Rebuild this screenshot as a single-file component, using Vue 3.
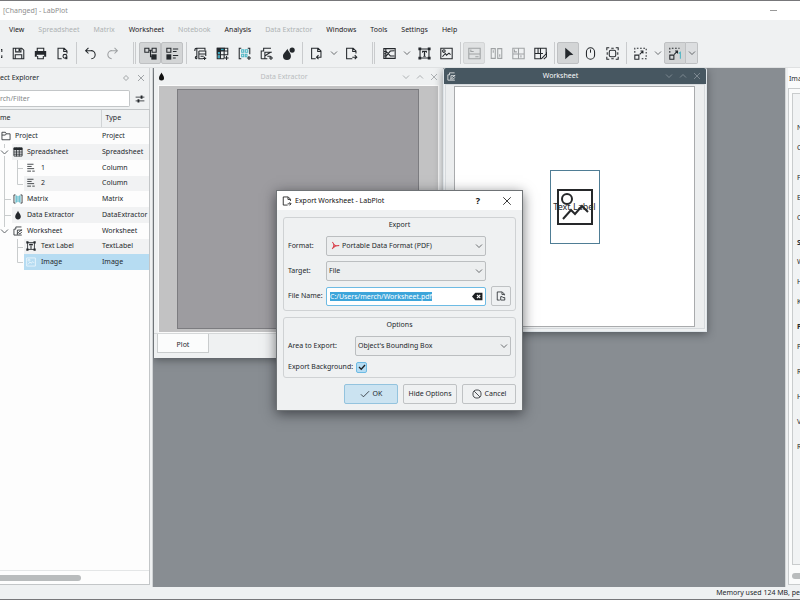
<script setup>
import { ref, onMounted } from 'vue'

const menus = [
  { label: 'View' },
  { label: 'Spreadsheet', off: true },
  { label: 'Matrix', off: true },
  { label: 'Worksheet' },
  { label: 'Notebook', off: true },
  { label: 'Analysis' },
  { label: 'Data Extractor', off: true },
  { label: 'Windows' },
  { label: 'Tools' },
  { label: 'Settings' },
  { label: 'Help' },
]

const tools = [
  { icon: 'edge', kind: 'edge', label: 'Open' },
  { icon: 'save', label: 'Save' },
  { icon: 'print', label: 'Print' },
  { icon: 'preview', label: 'Print preview' },
  { kind: 'sep' },
  { icon: 'undo', label: 'Undo' },
  { icon: 'redo', label: 'Redo', off: true },
  { kind: 'handle' },
  { icon: 'tree', label: 'Project explorer', on: true },
  { icon: 'props', label: 'Properties explorer', on: true },
  { kind: 'sep' },
  { icon: 'workbook', label: 'New workbook' },
  { icon: 'sheet-new', label: 'New spreadsheet' },
  { icon: 'matrix-new', label: 'New matrix' },
  { icon: 'worksheet-new', label: 'New worksheet' },
  { icon: 'extractor-new', label: 'New data extractor' },
  { kind: 'sep' },
  { icon: 'import', label: 'Import' },
  { icon: 'chevron', kind: 'arrow', label: 'Import options' },
  { icon: 'export', label: 'Export' },
  { kind: 'handle' },
  { icon: 'plot', label: 'New plot area' },
  { icon: 'chevron', kind: 'arrow', label: 'Plot area options' },
  { icon: 'text', label: 'Text label' },
  { icon: 'image', label: 'Image' },
  { kind: 'sep' },
  { icon: 'lay-v', label: 'Vertical layout', off: true, on: true, light: true },
  { icon: 'lay-h', label: 'Horizontal layout', off: true },
  { icon: 'lay-g', label: 'Grid layout', off: true },
  { icon: 'lay-e', label: 'Edit layout' },
  { kind: 'sep' },
  { icon: 'cursor', label: 'Select', on: true },
  { icon: 'mouse', label: 'Navigate' },
  { icon: 'zoomsel', label: 'Zoom selection' },
  { kind: 'sep' },
  { icon: 'mag', label: 'Magnification' },
  { icon: 'chevron', kind: 'arrow', label: 'Magnification options' },
  { icon: 'fit', kind: 'split', label: 'Zoom fit', on: true },
  { icon: 'chevron', kind: 'arrow splitarrow', label: 'Zoom fit options', on: true },
]

const tree = [
  { name: 'Project', type: 'Project', icon: 'folder', level: 0, lines: '' },
  { name: 'Spreadsheet', type: 'Spreadsheet', icon: 'sheet', level: 1, lines: 'M4.5 0V4M4.5 12V16', open: true },
  { name: '1', type: 'Column', icon: 'column', level: 2, lines: 'M4.5 0V16M17.5 0V16M17 8.5H23' },
  { name: '2', type: 'Column', icon: 'column', level: 2, lines: 'M4.5 0V16M17.5 0V8.5H23' },
  { name: 'Matrix', type: 'Matrix', icon: 'matrix', level: 1, lines: 'M4.5 0V16M4 8.5H11' },
  { name: 'Data Extractor', type: 'DataExtractor', icon: 'drop', level: 1, lines: 'M4.5 0V16M4 8.5H11' },
  { name: 'Worksheet', type: 'Worksheet', icon: 'worksheet', level: 1, lines: 'M4.5 0V4', open: true },
  { name: 'Text Label', type: 'TextLabel', icon: 'text', level: 2, lines: 'M17.5 0V16M17 8.5H23' },
  { name: 'Image', type: 'Image', icon: 'image', level: 2, lines: 'M17.5 0V8.5H23', selected: true },
]

const properties = [
  { t: 'N', gap: 'first' }, { t: 'C', gap: 'mid' }, { t: 'F', gap: 'wide' }, { t: 'E', gap: 'mid' }, { t: 'C', gap: 'mid' },
  { t: 'S', gap: 'far', head: true }, { t: 'W', gap: 'near' }, { t: 'H', gap: 'mid' }, { t: 'K', gap: 'mid' },
  { t: 'P', gap: 'far', head: true }, { t: 'P', gap: 'mid' }, { t: 'R', gap: 'far' }, { t: 'H', gap: 'far' }, { t: 'V', gap: 'far' }, { t: 'R', gap: 'far' },
]

const fileName = ref('C:/Users/merch/Worksheet.pdf')
const background = ref(true)
const fileInput = ref(null)

onMounted(() => {
  fileInput.value.focus()
  fileInput.value.select()
})
</script>

<template>
  <div class="app">
    <svg class="defs" aria-hidden="true">
      <symbol id="edge" viewBox="0 0 16 16"><path class="s" d="M0 3H1V6M0 13H1V10" /></symbol>
      <symbol id="save" viewBox="0 0 16 16"><path class="s" d="M1.5 1.5H12L14.5 4V14.5H1.5ZM4.5 1.5V6H11V1.5M4 14V9.5H12V14" /><path class="f" d="M8 2H10V5H8Z" /></symbol>
      <symbol id="print" viewBox="0 0 16 16"><path class="s" d="M4 5V1.5H12V5M4.5 11V14.5H11.5V11" /><path class="f" d="M1 5H15V12H12.5V9.5H3.5V12H1Z" /></symbol>
      <symbol id="preview" viewBox="0 0 16 16"><path class="s" d="M7 14.5H2.5V1.5H10L13.5 5V8M9.5 2V5.5H13" /><circle class="s" cx="11" cy="11.5" r="2.4" /><path class="f" d="M11.5 12H14V15H11.5Z" /></symbol>
      <symbol id="undo" viewBox="0 0 16 16"><path class="s" d="M5.5 1L2 4.5L5.5 8M2 4.5H8.5A5 5 0 0 1 9 14.5" /></symbol>
      <symbol id="redo" viewBox="0 0 16 16"><path class="s" d="M10.5 1L14 4.5L10.5 8M14 4.5H7.5A5 5 0 0 0 7 14.5" /></symbol>
      <symbol id="tree" viewBox="0 0 16 16"><path class="s" d="M1 1.5H6V6.5H1ZM10 1.5H15V6.5H10ZM6 4H10M8 4V12H10" /><path class="f" d="M9 9H15.5V15.5H9Z" /></symbol>
      <symbol id="props" viewBox="0 0 16 16"><path class="s" d="M1 1.5H6V6.5H1ZM8.5 2.5H15M8.5 5.5H13M8.5 10.5H15M8.5 13.5H12" /><path class="f" d="M.5 9H6.5V15.5H.5Z" /></symbol>
      <symbol id="workbook" viewBox="0 0 16 16"><path class="s" d="M3.5 14.5C1 14.5 1 11.5 3.5 11.5M3.5 14.5V1.5M1 5C1 2 1.5 1.5 3 1.5H13.5V4M6 5H14.5V11M6 5V14.5H11M6 8.5H14M8 11.5H12M13 12V16M11 14H15" /></symbol>
      <symbol id="sheet-new" viewBox="0 0 16 16"><path class="f" d="M1 1H11V5H1ZM1 5H5V9H1Z" /><path class="c" d="M6 1.5H10V4H6ZM2 6H5V9H2ZM2 10H5V14H2Z" /><path class="s" d="M1.5 1.5H14.5V10M1.5 1V14.5H10M1 5H15M1 9.5H15M5.5 1V14.5M10 1V14M13 11V16M10.5 13.5H15.5" /></symbol>
      <symbol id="matrix-new" viewBox="0 0 16 16"><path class="s" d="M4 1.5H1.5V14.5H4M12 1.5H14.5V9M13.5 11V16M11 13.5H16" /><path class="cs" d="M4.5 3.5H7V6.5H4.5ZM9 3.5H12V6.5H9ZM4.5 9H7V12H4.5ZM9 9H11V12H9Z" /></symbol>
      <symbol id="worksheet-new" viewBox="0 0 16 16"><path class="s" d="M1.5 14.5V5H4.5V1.5H13.5M1.5 14.5H9M6 14V6.5H14.5M6 11L9 9L14 6M9 11.5H13M13.5 11V16M11 13.5H16" /></symbol>
      <symbol id="worksheet" viewBox="0 0 16 16"><path class="s" d="M1.5 14.5V5H4.5V1.5H13.5M1.5 14.5H14M7 14V6.5H14.5M7 12L10 9L14.5 6M9 12.5L12 12L14 9.5" /></symbol>
      <symbol id="drop" viewBox="0 0 16 16"><path class="f" d="M8 1C9 4 12.5 7 12.5 10.5A4.5 4.5 0 0 1 3.5 10.5C3.5 7 7 4 8 1Z" /></symbol>
      <symbol id="extractor-new" viewBox="0 0 16 16"><path class="f" d="M6.5 2C7.5 5 11 7.5 11 11A4.8 4.8 0 0 1 1.2 11C1.2 7.5 5.5 5 6.5 2Z" /><circle class="f" cx="12.5" cy="3.8" r="3.2" /></symbol>
      <symbol id="import" viewBox="0 0 16 16"><path class="s" d="M7 14.5H2V1.5H10L13.5 5V12.5H8M9.5 2V5.5H13M10.5 10L8 12.5L10.5 15" /></symbol>
      <symbol id="export" viewBox="0 0 16 16"><path class="s" d="M9 14.5H2V1.5H10L13.5 5V8M9.5 2V5.5H13M9 12.5H14M12 10L14.5 12.5L12 15" /></symbol>
      <symbol id="chevron" viewBox="0 0 16 16"><path class="s" d="M2 5L8 11L14 5" /></symbol>
      <symbol id="chevron-up" viewBox="0 0 16 16"><path class="s" d="M2 11L8 5L14 11" /></symbol>
      <symbol id="close" viewBox="0 0 16 16"><path class="s" d="M2 2L14 14M14 2L2 14" /></symbol>
      <symbol id="diamond" viewBox="0 0 16 16"><path class="s" d="M8 3L13 8L8 13L3 8Z" /></symbol>
      <symbol id="plot" viewBox="0 0 16 16"><path class="s" d="M1 2H15V14H1ZM3.5 2V14M1 5.5H4L9 11L14 11M1 11H4L9 5L14 4.5M1 8.2H4" /></symbol>
      <symbol id="text" viewBox="0 0 16 16"><path class="s" d="M2.5 2.5H13.5V13.5H2.5Z" /><path class="f" d="M.5.5H4V4H.5ZM12 .5H15.5V4H12ZM.5 12H4V15.5H.5ZM12 12H15.5V15.5H12ZM5 4.5H11V7H10V6.2H8.8V11H9.5V12H6.5V11H7.2V6.2H6V7H5Z" /></symbol>
      <symbol id="image" viewBox="0 0 16 16"><path class="s" d="M1 1.5H15V14.5H1ZM3 12L6.5 8L8 10L11 7.5L13 9.5" /><circle class="s" cx="4.8" cy="5" r="1.6" /></symbol>
      <symbol id="lay-v" viewBox="0 0 16 16"><path class="s" d="M1 1.5H15V14.5H1ZM1 8.5H15M3.5 3V6M3 5.5H7M9 12H13" /></symbol>
      <symbol id="lay-h" viewBox="0 0 16 16"><path class="s" d="M1.5 2H6.5V14H1.5ZM9.5 2H14.5V14H9.5ZM4 4V7M12 9V12" /></symbol>
      <symbol id="lay-g" viewBox="0 0 16 16"><path class="s" d="M1 1.5H15V14.5H1ZM8 1.5V14.5M1 8.5H15M3 3V6H6M11 10V13" /></symbol>
      <symbol id="lay-e" viewBox="0 0 16 16"><path class="s" d="M9 14.5H1V1.5H15V8M8 1.5V14M1 8H11M5 1.5V8M9 14.5L15.5 8V12L12 15" /></symbol>
      <symbol id="cursor" viewBox="0 0 16 16"><path class="f" d="M4 1L14 9.5L9.5 10L4 15Z" /></symbol>
      <symbol id="mouse" viewBox="0 0 16 16"><rect class="s" x="3" y="1" width="10" height="14" rx="5" /><path class="s" d="M8 3V7" /></symbol>
      <symbol id="zoomsel" viewBox="0 0 16 16"><path class="s" d="M1 4V1H4M12 1H15V4M15 12V15H12M4 15H1V12M6.5 1.5H9.5M6.5 14.5H9.5M1.5 6.5V9.5M14.5 6.5V9.5" /><rect class="s" x="4" y="4" width="8" height="8" rx="2" /></symbol>
      <symbol id="mag" viewBox="0 0 16 16"><path class="s" d="M1 10H6V15H1ZM7 9L11 5M8 5H11V8" /><path class="s dots" d="M1 7V1.5H15V14.5H8" /></symbol>
      <symbol id="fit" viewBox="0 0 16 16"><path class="s" d="M1 10H6V15H1ZM6.5 9L10 5.5M7.5 5H10.5V8" /><path class="s dots" d="M1 7V1.5H13" /><path class="cs" d="M12 8L14 6.5V14.5" /></symbol>
      <symbol id="tune" viewBox="0 0 16 16"><path class="s" d="M1 5H15M1 11H15" /><path class="f" d="M9 2.5H12V7.5H9ZM4 8.5H7V13.5H4Z" /></symbol>
      <symbol id="folder" viewBox="0 0 16 16"><path class="s" d="M1.5 14V2H7L8.5 4.5H14.5V14ZM1.5 6.5H7L8.5 4.5" /></symbol>
      <symbol id="sheet" viewBox="0 0 16 16"><path class="f" d="M1 1H15V5H1Z" /><path class="s" d="M1.5 1.5H14.5V14.5H1.5ZM1 8H15M1 11.5H15M5.5 1V15M10 1V15" /></symbol>
      <symbol id="column" viewBox="0 0 16 16"><path class="s" d="M2 2H12M2 5.5H9M2 9H13M2 13H8M10 13H14" /></symbol>
      <symbol id="matrix" viewBox="0 0 16 16"><path class="c pale" d="M4 3H12V13H4Z" /><path class="s" d="M4 1.5H1.5V14.5H4M12 1.5H14.5V14.5H12" /><path class="cs" d="M5 2V14M11 2V14" /></symbol>
      <symbol id="pdf" viewBox="0 0 16 16"><path class="pdfs" d="M2 2C5 3 5 6 5 8S4 12 2 14M5 6C7 8.5 10 9 14.5 8C11 7.5 6 9 3 13" /></symbol>
      <symbol id="clear" viewBox="0 0 20 16"><path class="f" d="M6 1H19V15H6L0 8Z" /><path class="w" d="M9 5L15 11M15 5L9 11" /></symbol>
      <symbol id="doc-open" viewBox="0 0 16 16"><path class="s" d="M6 14.5H2V1.5H10L13.5 5V7M9.5 2V5.5H13M7.5 14.5V9H10L11 10.5H14V14.5Z" /></symbol>
      <symbol id="check" viewBox="0 0 16 16"><path class="s" d="M1.5 8.5L5.5 12.5L14.5 3.5" /></symbol>
      <symbol id="check-bold" viewBox="0 0 16 16"><path class="thick" d="M2 8L6.5 12.5L14 4" /></symbol>
      <symbol id="forbid" viewBox="0 0 16 16"><circle class="s" cx="8" cy="8" r="6.5" /><path class="s" d="M3.5 3.5L12.5 12.5" /></symbol>
    </svg>

    <header class="titlebar">
      <span>[Changed] - LabPlot</span>
      <button class="min" aria-label="Minimize"></button>
    </header>

    <nav class="menubar">
      <button v-for="m in menus" :key="m.label" :disabled="m.off">{{ m.label }}</button>
    </nav>

    <div class="toolbar" role="toolbar">
      <template v-for="(t, i) in tools" :key="i">
        <i v-if="t.kind === 'sep' || t.kind === 'handle'" :class="t.kind"></i>
        <button v-else class="tool" :class="[t.kind, { on: t.on, light: t.light }]" :disabled="t.off" :aria-label="t.label">
          <svg><use :href="'#' + t.icon" /></svg>
        </button>
      </template>
    </div>

    <main class="body">
      <aside class="explorer">
        <div class="dock-title">
          <span>ect Explorer</span>
          <button aria-label="Float"><svg><use href="#diamond" /></svg></button>
          <button aria-label="Close"><svg><use href="#close" /></svg></button>
        </div>
        <div class="search">
          <input type="text" placeholder="rch/Filter" aria-label="Filter" />
          <button aria-label="Filter options"><svg><use href="#tune" /></svg></button>
        </div>
        <div class="tree">
          <table>
            <thead>
              <tr><th class="name">me</th><th>Type</th></tr>
            </thead>
            <tbody>
              <tr v-for="row in tree" :key="row.name" :class="{ selected: row.selected }">
                <td class="name">
                  <div class="node">
                    <svg v-if="row.level" class="indent" :class="'l' + row.level">
                      <path class="branch" :d="row.lines" />
                      <path v-if="row.open" class="twist" d="M1 6.5L4.5 10L8 6.5" />
                    </svg>
                    <span class="item">
                      <svg><use :href="'#' + row.icon" /></svg>{{ row.name }}
                    </span>
                  </div>
                </td>
                <td>{{ row.type }}</td>
              </tr>
            </tbody>
          </table>
          <div class="hscroll"><i></i></div>
        </div>
      </aside>

      <section class="mdi">
        <article class="win extractor">
          <div class="win-title">
            <svg><use href="#drop" /></svg>
            <span>Data Extractor</span>
            <button aria-label="Shade"><svg><use href="#chevron" /></svg></button>
            <button aria-label="Maximize"><svg><use href="#chevron-up" /></svg></button>
            <button aria-label="Close"><svg><use href="#close" /></svg></button>
          </div>
          <div class="canvas"><div class="picture"></div></div>
          <div class="tabs"><button>Plot</button></div>
        </article>

        <article class="win worksheet">
          <div class="win-title">
            <svg><use href="#worksheet" /></svg>
            <span>Worksheet</span>
            <button aria-label="Shade"><svg><use href="#chevron" /></svg></button>
            <button aria-label="Maximize"><svg><use href="#chevron-up" /></svg></button>
            <button aria-label="Close"><svg><use href="#close" /></svg></button>
          </div>
          <div class="view">
            <div class="page">
              <div class="bounds">
                <svg viewBox="0 0 36 36">
                  <rect x="1" y="1" width="34" height="34" />
                  <circle cx="10" cy="10" r="5" />
                  <path d="M6 30L14 21L18 25L25 17L31 23" />
                </svg>
                <span>Text Label</span>
              </div>
            </div>
          </div>
        </article>
      </section>

      <aside class="props">
        <div class="props-title">Ima</div>
        <div class="props-frame">
          <div class="props-panel">
            <span v-for="(p, i) in properties" :key="i" :class="[p.gap, { head: p.head }]">{{ p.t }}</span>
          </div>
          <i class="thumb"></i>
        </div>
      </aside>
    </main>

    <footer class="status">Memory used 124 MB, pe</footer>

    <form class="dialog" role="dialog" aria-label="Export Worksheet - LabPlot" @submit.prevent>
      <div class="dialog-title">
        <svg><use href="#export" /></svg>
        <span>Export Worksheet - LabPlot</span>
        <button type="button" class="help">?</button>
        <button type="button" aria-label="Close"><svg><use href="#close" /></svg></button>
      </div>
      <div class="dialog-body">
        <section class="group export">
          <h2>Export</h2>
          <label for="format">Format:</label>
          <div class="select with-icon">
            <select id="format"><option>Portable Data Format (PDF)</option></select>
            <svg class="lead"><use href="#pdf" /></svg>
            <svg class="arrow"><use href="#chevron" /></svg>
          </div>
          <label for="target">Target:</label>
          <div class="select">
            <select id="target"><option>File</option></select>
            <svg class="arrow"><use href="#chevron" /></svg>
          </div>
          <label for="file">File Name:</label>
          <div class="file">
            <input id="file" ref="fileInput" v-model="fileName" type="text" spellcheck="false" />
            <svg><use href="#clear" /></svg>
          </div>
          <button type="button" class="browse" aria-label="Browse"><svg><use href="#doc-open" /></svg></button>
        </section>
        <section class="group options">
          <h2>Options</h2>
          <label for="area">Area to Export:</label>
          <div class="select">
            <select id="area"><option>Object's Bounding Box</option></select>
            <svg class="arrow"><use href="#chevron" /></svg>
          </div>
          <label for="bg">Export Background:</label>
          <div class="tick">
            <input id="bg" v-model="background" type="checkbox" />
            <svg v-if="background"><use href="#check-bold" /></svg>
          </div>
        </section>
        <div class="actions">
          <button type="submit" class="primary"><svg><use href="#check" /></svg>OK</button>
          <button type="button">Hide Options</button>
          <button type="button"><svg><use href="#forbid" /></svg>Cancel</button>
        </div>
      </div>
    </form>
  </div>
</template>

<style>
body {
  margin: 0;
}
</style>

<style scoped>
.app {
  position: relative;
  display: flex;
  flex-direction: column;
  box-sizing: border-box;
  height: 100vh;
  overflow: hidden;
  border-top: 1px solid #77777a;
  border-bottom: 1px solid #77777a;
  background: #eff1f2;
  color: #24282c;
  font: 7px/12px "Noto Sans", sans-serif;
}
.app *, .app *::before { box-sizing: border-box; }
.defs { position: absolute; width: 0; height: 0; }
svg { width: 13px; height: 13px; flex: none; display: block; }
.s { fill: none; stroke: currentColor; stroke-width: 1.3; }
.f { fill: currentColor; }
.c { fill: #3fa9c0; }
.pale { opacity: .5; }
.cs { fill: none; stroke: #4fb5c4; stroke-width: 1.3; }
.dots { stroke-dasharray: 2 2; }
.pdfs { fill: none; stroke: #d9434e; stroke-width: 1.8; }
.w { fill: none; stroke: #fff; stroke-width: 2; }
.thick { fill: none; stroke: #1d2023; stroke-width: 2.6; }
button {
  display: flex;
  align-items: center;
  justify-content: center;
  padding: 0;
  border: 0;
  background: none;
  color: inherit;
  font: inherit;
  white-space: nowrap;
}
input, select { font: inherit; color: inherit; min-width: 0; margin: 0; }

.titlebar {
  display: flex;
  flex: none;
  align-items: center;
  justify-content: space-between;
  height: 19px;
  padding: 0 23px 0 3px;
  background: #fff;
  color: #8e8e8e;
}
.min { width: 7px; height: 12px; }
.min::before { content: ""; width: 7px; height: 1px; background: #999; }

.menubar { display: flex; flex: none; height: 19px; padding-left: 2px; }
.menubar button { padding: 0 7px; color: #1c2023; }
.menubar button:disabled { color: #aeb1b3; }

.toolbar {
  display: flex;
  flex: none;
  align-items: center;
  height: 29px;
  border-bottom: 1px solid #dfe1e2;
}
.tool { width: 22px; height: 22px; flex: none; border: 1px solid transparent; border-radius: 2px; }
.tool:disabled { color: #9fa2a4; }
.tool.on { background: #d3d5d6; border-color: #bfc1c3; }
.tool.light { background: #e0e2e3; border-color: #d3d5d6; }
.tool.edge { width: 7px; justify-content: flex-start; }
.tool.arrow { width: 13px; }
.tool.arrow svg { width: 8px; height: 8px; }
.tool.split { border-radius: 2px 0 0 2px; }
.tool.splitarrow { width: 12px; border-left: 0; border-radius: 0 2px 2px 0; background: #dcdee0; }
.sep { width: 6px; height: 22px; flex: none; background: linear-gradient(#c9cbcd, #c9cbcd) center / 1px 100% no-repeat; }
.handle { width: 3px; height: 22px; flex: none; margin: 0 3px 0 10px; border: solid #c9cbcd; border-width: 0 1px; }

.body { display: flex; flex: 1; min-height: 0; }
.explorer {
  display: flex;
  flex-direction: column;
  flex: none;
  width: 153px;
  padding-right: 2px;
  border-right: 1px solid #d0d3d5;
  overflow: hidden;
}
.dock-title { display: flex; align-items: center; gap: 5px; height: 20px; padding-right: 3px; border-right: 1px solid #d0d3d5; }
.dock-title span { flex: 1; }
.dock-title svg { width: 8px; height: 8px; }
.dock-title button { width: 10px; height: 10px; color: #777b7e; }
.search { display: flex; align-items: center; gap: 5px; padding: 2px 4px 2px 0; border-right: 1px solid #d0d3d5; }
.search input { width: 130px; height: 17px; padding: 0; border: 1px solid #c3c6c8; border-left: 0; border-radius: 0 2px 2px 0; background: #fff; outline: 0; }
.search input::placeholder { color: #83878a; opacity: 1; }
.search svg { width: 10px; height: 10px; }

.tree { display: flex; flex: 1; flex-direction: column; margin-bottom: 2px; border: 1px solid #c3c6c8; border-left: 0; background: #fdfdfd; }
table { width: 100%; table-layout: fixed; border-collapse: collapse; }
th, td { padding: 0 0 0 1px; text-align: left; font-weight: 400; white-space: nowrap; overflow: hidden; }
th { height: 17px; background: #eff1f2; border-bottom: 1px solid #d9dbdc; padding-left: 4px; }
.name { width: 101px; padding: 0; }
th.name { border-right: 1px solid #d0d3d5; }
tbody tr:nth-child(even) td:last-child, tbody tr:nth-child(even) .item { background: #f1f2f3; }
tbody .selected td:last-child, tbody .selected .item { background: #b6dcf2; }
.node { display: flex; height: 16px; overflow: hidden; }
tr:nth-child(4n) .node { height: 15px; }
.indent { height: 16px; }
.l1 { width: 12px; }
.l2 { width: 24px; }
.branch { fill: none; stroke: #c9cccd; stroke-width: 1; }
.twist { fill: none; stroke: #63686c; stroke-width: 1; }
.item { display: flex; flex: 1; align-items: center; gap: 4px; padding-left: 1px; }
.l2 + .item { gap: 5px; padding-left: 2px; }
.item svg { width: 10px; height: 10px; }
.selected .item svg { color: #eef8fd; }
.hscroll { display: flex; align-items: center; height: 14px; margin-top: auto; border-top: 1px solid #e4e6e7; }
.hscroll i { width: 81px; height: 6px; border-radius: 0 3px 3px 0; background: #b9bcbd; }

.mdi { position: relative; flex: 1; overflow: hidden; background: #888d92; }
.win { position: absolute; top: 0; display: flex; flex-direction: column; background: #eff1f2; box-shadow: 0 2px 8px rgba(30, 34, 38, .5); }
.win-title { display: flex; flex: none; align-items: center; height: 17px; padding: 0 2px 0 3px; }
.win-title span { flex: 1; text-align: center; padding-left: 3px; }
.win-title svg { width: 9px; height: 9px; }
.win-title button { width: 14px; height: 12px; }
.win-title button svg { width: 8px; height: 8px; }
.extractor { left: 1px; width: 289px; height: 290px; }
.extractor .win-title { color: #b9bcbe; }
.extractor .win-title > svg { color: #111; }
.extractor .win-title button { color: #8a8e91; }
.canvas { flex: 1; display: flex; justify-content: center; margin: 0 4px; padding: 3px 19px 3px 18px; background: #c2c2c3; border: 1px solid #fafafa; }
.picture { flex: 1; background: #9d9ca0; border: 1px solid #7c7c80; }
.tabs { display: flex; height: 25px; padding: 0 3px 5px; border-top: 1px solid #d5d8d9; }
.tabs button { width: 52px; padding-top: 3px; background: #fbfcfc; border: 1px solid #c9cccd; border-top: 0; }
.worksheet { left: 290px; width: 264px; height: 264px; border: 1px solid #dfe5e9; border-top: 0; border-radius: 2px 2px 0 0; }
.worksheet .win-title { height: 16px; border-radius: 2px 2px 0 0; background: #475761; color: #fcfcfc; }
.worksheet .win-title button { color: #99a3aa; }
.view { flex: 1; display: flex; padding: 1px 9px 1px 8px; margin: 0 1px 2px; background: #eceeef; border: 1px solid #d6dadd; }
.page { flex: 1; display: flex; align-items: center; justify-content: center; background: #fff; border: 1px solid #a9abad; }
.bounds { display: grid; place-items: center; width: 50px; height: 74px; border: 1px solid #4f7d95; }
.bounds svg, .bounds span { grid-area: 1 / 1; }
.bounds svg { width: 36px; height: 36px; fill: none; stroke: #26282a; stroke-width: 2; }
.bounds span { font-size: 9px; white-space: nowrap; }

.props { flex: none; display: flex; flex-direction: column; width: 15px; overflow: hidden; border-left: 1px solid #d5d8d9; padding: 0 0 2px 2px; }
.props-title { height: 20px; padding-left: 1px; line-height: 21px; background: #fafbfb; }
.props-frame { flex: 1; display: flex; flex-direction: column; padding: 4px 0 5px 3px; background: #fafbfb; border: 1px solid #c9cccd; border-right: 0; }
.props-panel { flex: 1; display: flex; flex-direction: column; padding-left: 4px; background: #f1f3f4; border: 1px solid #c9cccd; border-right: 0; overflow: hidden; }
.props-panel span { line-height: 12px; }
.head { font-weight: 700; }
.first { margin-top: 28px; }
.near { margin-top: 7px; }
.mid { margin-top: 8px; }
.far { margin-top: 13px; }
.wide { margin-top: 18px; }
.thumb { height: 6px; margin-top: 8px; border-radius: 3px 0 0 3px; background: #b9bcbd; }

.status { flex: none; height: 12px; text-align: right; white-space: nowrap; }

.dialog {
  position: absolute;
  left: 276px;
  top: 189px;
  width: 247px;
  border: 1px solid #6f7376;
  background: #eff1f2;
  box-shadow: 0 3px 12px rgba(20, 22, 26, .6);
}
.dialog-title { display: flex; align-items: center; height: 19px; padding: 0 10px 0 5px; background: #fff; color: #111; }
.dialog-title svg { width: 10px; height: 10px; }
.dialog-title span { flex: 1; margin-left: 3px; }
.dialog-title button { width: 10px; }
.help { margin-right: 19px; font-size: 9px; font-weight: 700; }
.dialog-body { padding: 7px 6px 6px; }
.group { display: grid; align-items: center; padding: 1px 4px 4px; border: 1px solid #cfd2d4; border-radius: 3px; }
.group h2 { grid-column: 1 / -1; margin: 0; font: inherit; line-height: 12px; text-align: center; }
.group label { grid-column: 1; white-space: nowrap; }
.export { grid-template-columns: 38px 160px 1fr; row-gap: 5px; }
.browse { width: 20px; height: 20px; margin-left: 5px; border: 1px solid #bfc2c4; border-radius: 2px; }
.browse svg { width: 10px; height: 10px; }
.select { position: relative; }
select {
  display: block;
  width: 100%;
  height: 20px;
  padding: 0 2px;
  appearance: none;
  border: 1px solid #bbbec0;
  border-radius: 2px;
  background: #eceeef;
}
.with-icon select { padding-left: 15px; }
.select svg { position: absolute; pointer-events: none; }
.select .lead { left: 5px; top: 5px; width: 9px; height: 9px; }
.select .arrow { right: 3px; top: 6px; width: 8px; height: 8px; }
.file { display: flex; align-items: center; position: relative; }
.file input { width: 100%; height: 19px; padding: 0 3px; border: 1px solid #6dbbe4; border-radius: 2px; background: #fff; outline: 0; }
.file input::selection { background: #3da5da; color: #fff; }
.file svg { position: absolute; right: 3px; width: 11px; height: 9px; color: #1d2023; }
.options { grid-template-columns: 67px 1fr; margin-top: 6px; row-gap: 5px; }
.tick { display: grid; width: 11px; height: 11px; margin-left: 1px; }
.tick input { grid-area: 1 / 1; width: 11px; height: 11px; appearance: none; border: 1px solid #6dbbe4; border-radius: 2px; background: #b5dcf3; }
.tick svg { grid-area: 1 / 1; place-self: center; width: 8px; height: 8px; pointer-events: none; }
.actions { display: flex; justify-content: flex-end; gap: 5px; margin-top: 6px; }
.actions button { width: 54px; height: 20px; gap: 3px; border: 1px solid #bfc2c4; border-radius: 2px; }
.actions .primary { background: #cbe3f1; border-color: #93c3de; }
.actions svg { width: 10px; height: 10px; }
</style>
